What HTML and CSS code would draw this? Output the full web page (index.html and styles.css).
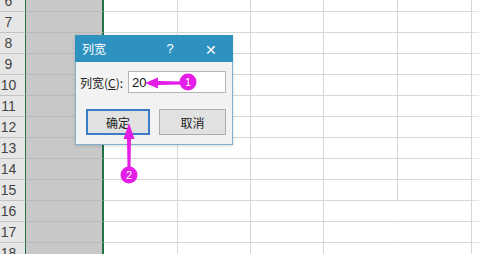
FILE: index.html
```html
<!DOCTYPE html>
<html lang="zh-CN">
<head>
  <meta charset="UTF-8">
  <title>列宽</title>
  <link rel="stylesheet" href="styles.css">
</head>
<body>
  <div class="sheet">
    <div class="row"><div class="rh">6</div><div class="sel"></div><div class="c c1"></div><div class="c c2"></div><div class="c c3"></div><div class="c c4"></div><div class="c c5"></div><div class="tail"></div></div>
    <div class="row"><div class="rh">7</div><div class="sel"></div><div class="c c1"></div><div class="c c2"></div><div class="c c3"></div><div class="c c4"></div><div class="c c5"></div><div class="tail"></div></div>
    <div class="row"><div class="rh">8</div><div class="sel"></div><div class="c c1"></div><div class="c c2"></div><div class="c c3"></div><div class="c c4"></div><div class="c c5"></div><div class="tail"></div></div>
    <div class="row"><div class="rh">9</div><div class="sel"></div><div class="c c1"></div><div class="c c2"></div><div class="c c3"></div><div class="c c4"></div><div class="c c5"></div><div class="tail"></div></div>
    <div class="row"><div class="rh">10</div><div class="sel"></div><div class="c c1"></div><div class="c c2"></div><div class="c c3"></div><div class="c c4"></div><div class="c c5"></div><div class="tail"></div></div>
    <div class="row"><div class="rh">11</div><div class="sel"></div><div class="c c1"></div><div class="c c2"></div><div class="c c3"></div><div class="c c4"></div><div class="c c5"></div><div class="tail"></div></div>
    <div class="row"><div class="rh">12</div><div class="sel"></div><div class="c c1"></div><div class="c c2"></div><div class="c c3"></div><div class="c c4"></div><div class="c c5"></div><div class="tail"></div></div>
    <div class="row"><div class="rh">13</div><div class="sel"></div><div class="c c1"></div><div class="c c2"></div><div class="c c3"></div><div class="c c4"></div><div class="c c5"></div><div class="tail"></div></div>
    <div class="row"><div class="rh">14</div><div class="sel"></div><div class="c c1"></div><div class="c c2"></div><div class="c c3"></div><div class="c c4"></div><div class="c c5"></div><div class="tail"></div></div>
    <div class="row"><div class="rh">15</div><div class="sel"></div><div class="c c1"></div><div class="c c2"></div><div class="c c3"></div><div class="c c4"></div><div class="c c5"></div><div class="tail"></div></div>
    <div class="row"><div class="rh">16</div><div class="sel"></div><div class="c c1"></div><div class="c c2"></div><div class="c c3 open"></div><div class="c c4"></div><div class="c c5"></div><div class="tail"></div></div>
    <div class="row"><div class="rh">17</div><div class="sel"></div><div class="c c1"></div><div class="c c2"></div><div class="c c3 open"></div><div class="c c4"></div><div class="c c5"></div><div class="tail"></div></div>
    <div class="row"><div class="rh">18</div><div class="sel"></div><div class="c c1"></div><div class="c c2"></div><div class="c c3 open"></div><div class="c c4"></div><div class="c c5"></div><div class="tail"></div></div>
  </div>

  <div class="dialog">
    <div class="titlebar">
      <span class="title">列宽</span>
      <span class="help">?</span>
      <span class="close">✕</span>
    </div>
    <div class="dbody">
      <div class="field">
        <label for="colWidth">列宽(<u>C</u>):</label>
        <input type="text" id="colWidth" value="20">
      </div>
      <div class="buttons">
        <button class="btn ok">确定</button>
        <button class="btn">取消</button>
      </div>
    </div>
  </div>

  <svg class="marks" width="500" height="254" viewBox="0 0 500 254">
    <polygon points="145,83 158,77.5 158,81 182,81.5 182,84.5 158,85 158,88.5" fill="#e41ee6"/>
    <circle cx="188" cy="82" r="8.5" fill="#e41ee6"/>
    <text x="188" y="86" class="num">1</text>
    <polygon points="129,123 134.5,139 131,139 130.5,168 127.5,168 127,139 123.5,139" fill="#e41ee6"/>
    <circle cx="129" cy="175" r="8.5" fill="#e41ee6"/>
    <text x="129" y="179" class="num">2</text>
  </svg>
</body>
</html>
```

FILE: styles.css
```css
body {
  margin: 0;
  width: 500px;
  height: 254px;
  overflow: hidden;
  background: #fff;
  font-family: "Noto Sans CJK SC", "Liberation Sans", sans-serif;
  position: relative;
}

/* sheet grid */
.sheet {
  margin-top: -9px;
}
.row {
  display: flex;
  height: 21px;
}
.row > div {
  box-sizing: border-box;
  height: 21px;
  border-bottom: 1px solid #d6d6d6;
}
.rh {
  width: 25px;
  background: #e6e6e6;
  border-bottom-color: #c4c4c4 !important;
  color: #444;
  font-family: "Liberation Sans", sans-serif;
  font-size: 14px;
  line-height: 21px;
  text-align: center;
  padding-right: 8px;
}
.sel {
  width: 79px;
  background: #c8c8c8;
  border-left: 1px solid #217346;
  border-right: 2px solid #217346;
  border-bottom-color: #b9b9b9 !important;
}
.c {
  border-right: 1px solid #d6d6d6;
}
.c1 { width: 74px; }
.c2 { width: 73px; }
.c3 { width: 73px; }
.c4 { width: 74px; }
.c5 { width: 74px; }
.c3.open + .c4 { border-right-color: transparent; }
.tail {
  width: 7px;
  border-bottom-color: #e2e2e2 !important;
}

/* dialog */
.dialog {
  position: absolute;
  left: 75px;
  top: 35px;
  width: 158px;
  height: 110px;
  box-sizing: border-box;
  background: #f2f2f2;
  border: 1px solid #7fb0d2;
  border-top: none;
  box-shadow: 0 1px 3px rgba(0, 0, 0, 0.15);
}
.titlebar {
  display: flex;
  align-items: center;
  height: 27px;
  background: #2d92c0;
  color: #fff;
  font-size: 12px;
  padding: 0 10px 0 7px;
  margin: 0 -1px;
}
.title {
  flex: 1;
}
.help {
  width: 14px;
  text-align: center;
  font-family: "Liberation Sans", sans-serif;
  font-size: 13px;
}
.close {
  width: 24px;
  text-align: center;
  margin-left: 22px;
  font-size: 14px;
}
.dbody {
  padding: 9px 6px 0 4px;
}
.field {
  display: flex;
  align-items: center;
  gap: 4px;
}
.field label {
  font-size: 12px;
  color: #222;
  width: 48px;
}
.field input {
  width: 98px;
  height: 22px;
  box-sizing: border-box;
  border: 1px solid #b5b5b5;
  background: #fff;
  padding: 0 3px;
  font-family: "Liberation Sans", sans-serif;
  font-size: 13px;
  color: #111;
  outline: none;
}
.buttons {
  display: flex;
  gap: 9px;
  margin-top: 16px;
  padding-left: 6px;
}
.btn {
  width: 69px;
  height: 26px;
  box-sizing: border-box;
  background: #e1e1e1;
  border: 1px solid #adadad;
  font-family: "Noto Sans CJK SC", sans-serif;
  font-size: 12px;
  color: #222;
  padding: 0;
}
.btn.ok {
  width: 66px;
  border: 2px solid #3b7dc4;
}

/* callouts */
.marks {
  position: absolute;
  left: 0;
  top: 0;
  pointer-events: none;
}
.num {
  fill: #fff;
  font-family: "Liberation Sans", sans-serif;
  font-size: 11px;
  text-anchor: middle;
}
```
